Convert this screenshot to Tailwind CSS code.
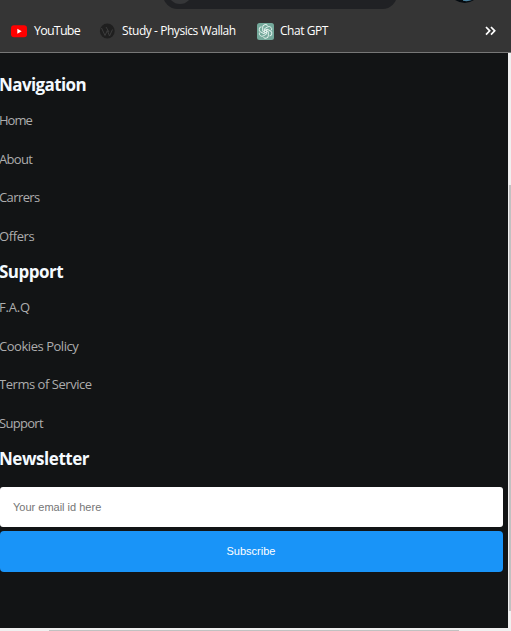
<!DOCTYPE html>
<html lang="en">
<head>
<meta charset="utf-8">
<title>Footer</title>
<script src="https://cdn.jsdelivr.net/npm/@tailwindcss/browser@4"></script>
</head>
<body class="w-[511px] h-[631px] overflow-hidden bg-[#121415] flex flex-col font-['Open_Sans',sans-serif]">
<header class="relative h-[53px] shrink-0 overflow-hidden bg-[#353535] border-b border-[#777] text-white">
  <div class="absolute left-[163px] -top-[20px] w-[234px] h-[29px] rounded-full bg-[#202124]"></div>
  <div class="absolute left-[168px] -top-[20px] w-6 h-6 rounded-full bg-[#353638]"></div>
  <svg class="absolute left-[454px] top-0" width="24" height="4"><path d="M1 0Q11 6 20 0Z" fill="#050b10"/><path d="M9 0L18 0Q14 1.8 9 .8Z" fill="#4d86a3"/></svg>
  <nav class="h-full pt-[21px] flex items-start text-[12px] leading-5">
    <a class="flex items-center ml-[11px] w-[88px]">
      <svg class="shrink-0" width="16" height="18" viewBox="0 0 16 18"><rect y="3.2" width="16" height="12" rx="3" fill="#f00"/><path d="M6.3 6.8L10.7 9.2L6.3 11.7Z" fill="#fff"/></svg>
      <span class="ml-[7px] whitespace-nowrap tracking-[-0.78px] text-[12.5px]">YouTube</span>
    </a>
    <a class="flex items-center w-[158px]">
      <svg class="shrink-0" width="16" height="18" viewBox="0 0 16 18"><circle cx="8.3" cy="9" r="7.4" fill="#1f1f1f"/><path d="M2.5 6L6 13.5L8.3 8.5L10.5 14L13.5 7.5M7 5L10 10" fill="none" stroke="#3c3c3c" stroke-width="1"/></svg>
      <span class="ml-[7px] whitespace-nowrap tracking-[-0.44px]">Study - Physics Wallah</span>
    </a>
    <a class="flex items-center">
      <svg class="shrink-0" width="17" height="18" viewBox="0 0 17 18"><rect y="1" width="17" height="17" rx="2.5" fill="#74a99b"/><g fill="none" stroke="#e4f2ee" stroke-width=".95" transform="translate(8.5 9.4)"><path id="petal" d="M-1.1 -2.6L2.5 -4.7A2.7 2.7 0 0 1 6 -1.2M-1.1 -2.6V1.2"/><use href="#petal" transform="rotate(60)"/><use href="#petal" transform="rotate(120)"/><use href="#petal" transform="rotate(180)"/><use href="#petal" transform="rotate(240)"/><use href="#petal" transform="rotate(300)"/></g></svg>
      <span class="ml-[6px] whitespace-nowrap tracking-[-0.44px]">Chat GPT</span>
    </a>
    <svg class="ml-auto mr-[15px] mt-[5px]" width="11" height="10" viewBox="0 0 11 10"><path d="M1 1L4.7 4.8L1 8.6M6 1L9.7 4.8L6 8.6" fill="none" stroke="#fff" stroke-width="1.7"/></svg>
  </nav>
</header>
<div class="flex h-[575px] shrink-0">
  <main class="w-[508px] pt-[16px] text-[13px] text-[#adadad]">
    <section class="h-[187px]">
      <h2 class="h-[32.2px] -ml-px leading-[32px] text-[17px] font-bold text-[#f4faff] tracking-[-0.6px]">Navigation</h2>
      <ul class="-ml-px leading-[38.6px] tracking-[-0.6px]"><li class="tracking-[-1px]">Home</li><li class="tracking-[-0.7px]">About</li><li>Carrers</li><li class="tracking-[-0.4px]">Offers</li></ul>
    </section>
    <section class="h-[187px]">
      <h2 class="h-[32.2px] -ml-px leading-[32px] text-[17px] font-bold text-[#f4faff] tracking-[-0.5px]">Support</h2>
      <ul class="-ml-px leading-[38.6px] tracking-[-0.46px]"><li class="tracking-[-0.2px]">F.A.Q</li><li>Cookies Policy</li><li>Terms of Service</li><li class="tracking-[-0.7px]">Support</li></ul>
    </section>
    <section>
      <h2 class="h-[44px] -ml-px leading-[32px] text-[17px] font-bold text-[#f4faff] tracking-[-0.45px]">Newsletter</h2>
      <form class="w-[503px] flex flex-col gap-1 font-['Liberation_Sans',Arial,sans-serif] text-[11px]">
        <input class="block h-[40px] rounded-[3px] bg-white pl-[13px] placeholder:text-[#757575]" placeholder="Your email id here">
        <button type="button" class="h-[41px] rounded-[4px] bg-[#1994f8] text-white pr-px">Subscribe</button>
      </form>
    </section>
  </main>
  <div class="w-[3px] bg-[#f0f0f0] flex justify-end pt-[132px]"><div class="w-[2px] h-[426px] bg-[#c1c1c1]"></div></div>
</div>
<div class="h-[3px] shrink-0 bg-[#f0f0f0] flex items-end pl-[49px]"><div class="w-[410px] h-[1px] bg-[#c1c1c1]"></div></div>
</body>
</html>
